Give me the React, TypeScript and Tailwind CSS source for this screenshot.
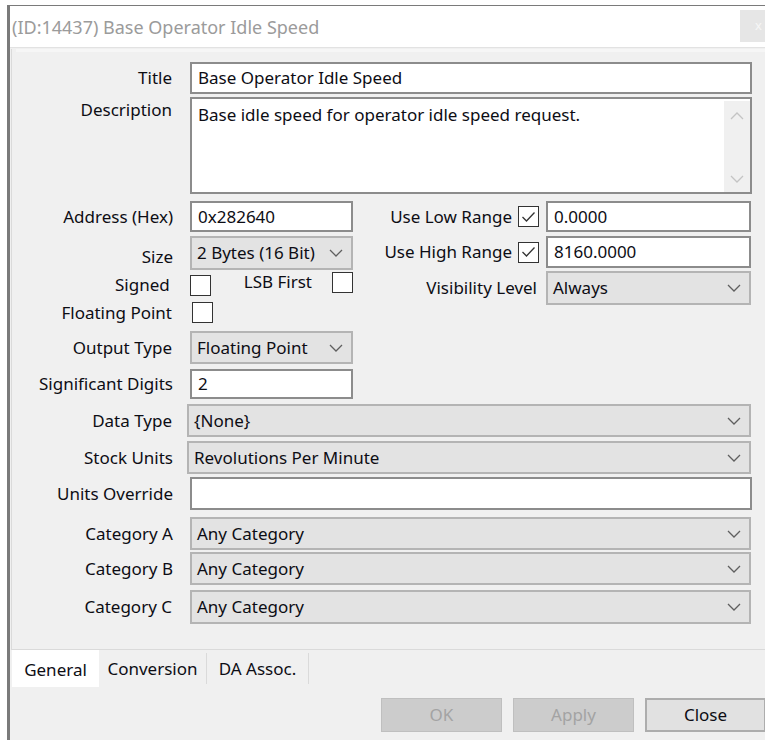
import React from "react";

const FONT = { fontFamily: '"Noto Sans", "Open Sans", sans-serif' };

function Chevron({ color = "#5f5f5f", up = false }: { color?: string; up?: boolean }) {
  return (
    <svg width="14" height="8" viewBox="0 0 14 8" className="shrink-0">
      <polyline
        points={up ? "1,7 7,1 13,7" : "1,1 7,7 13,1"}
        fill="none"
        stroke={color}
        strokeWidth="1.3"
      />
    </svg>
  );
}

function CheckBox({ checked = false }: { checked?: boolean }) {
  return (
    <div className="w-[21px] h-[21px] border-[1.5px] border-[#333333] bg-white flex items-center justify-center shrink-0">
      {checked && (
        <svg width="15" height="12" viewBox="0 0 15 12">
          <polyline points="1.5,6 5.5,10 13.5,1.5" fill="none" stroke="#333333" strokeWidth="1.3" />
        </svg>
      )}
    </div>
  );
}

function TextBox({ value, className = "" }: { value: string; className?: string }) {
  return (
    <div className={`border-2 border-[#8c8c8c] bg-white flex items-center pl-[6px] text-[17px] text-[#0d0d14] whitespace-nowrap ${className}`}>
      {value}
    </div>
  );
}

function Combo({ value, className = "" }: { value: string; className?: string }) {
  return (
    <div className={`border-2 border-[#b4b4b4] bg-[#e3e3e3] flex items-center justify-between pl-[5px] pr-[8px] text-[17px] text-[#0d0d14] whitespace-nowrap ${className}`}>
      <span>{value}</span>
      <Chevron />
    </div>
  );
}

function Label({ text, className = "" }: { text: string; className?: string }) {
  return <div className={`text-right text-[17px] text-[#0d0d14] whitespace-nowrap ${className}`}>{text}</div>;
}

export default function App() {
  return (
    <div className="w-[765px] h-[740px] bg-white overflow-hidden" style={FONT}>
      <div className="ml-[7px] mt-[5px] border-l-[3px] border-t border-[#7a7a7a] h-[735px] flex flex-col">
        {/* caption bar */}
        <div className="h-[42px] bg-white flex justify-between border-b border-[#e2e2e2] shrink-0">
          <div className="pl-[2px] pt-[8px] text-[18px] text-[#9b9b9b] whitespace-nowrap">(ID:14437) Base Operator Idle Speed</div>
          <div className="w-[25px] h-[32px] mt-[4px] bg-[#e6e6e6] flex items-center justify-end pr-[3px] text-[13px] text-[#f6f6f6]">x</div>
        </div>

        {/* dialog body */}
        <div className="flex-1 bg-[#f0f0f0] flex flex-col">
          <div className="ml-[1px] mt-[1px] h-[600px] border-l border-[#dadada] bg-[#f0f0f0] flex flex-col">
            <div className="h-[3px] bg-[#f6f6f6] ml-[4px]" />
            {/* Title */}
            <div className="flex items-center mt-[10px]">
              <Label text="Title" className="w-[160px]" />
              <TextBox value="Base Operator Idle Speed" className="ml-[18px] w-[562px] h-[32px]" />
            </div>
            {/* Description */}
            <div className="flex items-start mt-[3px]">
              <Label text="Description" className="w-[160px]" />
              <div className="ml-[18px] w-[562px] h-[97px] border-2 border-[#8c8c8c] bg-white flex">
                <div className="flex-1 pl-[6px] pt-[3px] text-[17px] text-[#0d0d14]">
                  Base idle speed for operator idle speed request.
                </div>
                <div className="w-[26px] mt-[2px] bg-[#f0f0f0] flex flex-col items-center justify-between pt-[11px] pb-[9px]">
                  <Chevron up color="#c4c4c4" />
                  <Chevron color="#c4c4c4" />
                </div>
              </div>
            </div>

            {/* address / size / flags with ranges on the right */}
            <div className="flex mt-[7px]">
              <div className="flex flex-col w-[341px]">
                <div className="flex items-center h-[31px]">
                  <Label text="Address (Hex)" className="w-[161px]" />
                  <TextBox value="0x282640" className="ml-[17px] w-[163px] h-[31px]" />
                </div>
                <div className="flex items-end h-[34px] mt-[4px]">
                  <Label text="Size" className="w-[161px] pb-[1px]" />
                  <Combo value="2 Bytes (16 Bit)" className="ml-[17px] w-[163px] h-[34px]" />
                </div>
                <div className="flex items-start h-[24px] mt-[2px]">
                  <Label text="Signed" className="w-[160px]" />
                  <div className="ml-[20px] mt-[3px]">
                    <CheckBox />
                  </div>
                  <Label text="LSB First" className="ml-[33px] mt-[-3px]" />
                  <div className="ml-[20px]">
                    <CheckBox />
                  </div>
                </div>
                <div className="flex items-center h-[21px] mt-[6px]">
                  <Label text="Floating Point" className="w-[160px]" />
                  <div className="ml-[20px]">
                    <CheckBox />
                  </div>
                </div>
              </div>
              <div className="flex flex-col items-end w-[398px]">
                <div className="flex items-center h-[31px]">
                  <Label text="Use Low Range" />
                  <div className="ml-[6px]">
                    <CheckBox checked />
                  </div>
                  <TextBox value="0.0000" className="ml-[7px] w-[205px] h-[31px]" />
                </div>
                <div className="flex items-center h-[32px] mt-[4px]">
                  <Label text="Use High Range" />
                  <div className="ml-[6px]">
                    <CheckBox checked />
                  </div>
                  <TextBox value="8160.0000" className="ml-[7px] w-[205px] h-[32px]" />
                </div>
                <div className="flex items-center h-[34px] mt-[3px]">
                  <Label text="Visibility Level" />
                  <Combo value="Always" className="ml-[9px] w-[205px] h-[34px]" />
                </div>
              </div>
            </div>

            {/* Output Type */}
            <div className="flex items-center mt-[8px]">
              <Label text="Output Type" className="w-[160px]" />
              <Combo value="Floating Point" className="ml-[18px] w-[163px] h-[33px]" />
            </div>
            {/* Significant Digits */}
            <div className="flex items-center mt-[5px]">
              <Label text="Significant Digits" className="w-[161px]" />
              <TextBox value="2" className="ml-[17px] w-[163px] h-[30px]" />
            </div>
            {/* Data Type */}
            <div className="flex items-center mt-[5px]">
              <Label text="Data Type" className="w-[160px]" />
              <Combo value="{None}" className="ml-[15px] w-[564px] h-[33px]" />
            </div>
            {/* Stock Units */}
            <div className="flex items-center mt-[4px]">
              <Label text="Stock Units" className="w-[161px]" />
              <Combo value="Revolutions Per Minute" className="ml-[14px] w-[564px] h-[33px]" />
            </div>
            {/* Units Override */}
            <div className="flex items-center mt-[3px]">
              <Label text="Units Override" className="w-[161px]" />
              <TextBox value="" className="ml-[17px] w-[562px] h-[33px]" />
            </div>
            {/* Categories */}
            <div className="flex items-center mt-[7px]">
              <Label text="Category A" className="w-[161px]" />
              <Combo value="Any Category" className="ml-[17px] w-[561px] h-[33px]" />
            </div>
            <div className="flex items-center mt-[2px]">
              <Label text="Category B" className="w-[161px]" />
              <Combo value="Any Category" className="ml-[17px] w-[561px] h-[33px]" />
            </div>
            <div className="flex items-center mt-[5px]">
              <Label text="Category C" className="w-[160px]" />
              <Combo value="Any Category" className="ml-[18px] w-[561px] h-[34px]" />
            </div>
          </div>

          {/* tab strip */}
          <div className="border-t border-[#dadada] flex items-start h-[38px] ml-[1px]">
            <div className="ml-[1px] w-[87px] h-[37px] bg-white flex items-center justify-center pt-[2px] text-[17px] text-[#0d0d14]">
              General
            </div>
            <div className="mt-[3px] w-[108px] h-[31px] border-r border-[#dadada] flex items-center justify-center text-[17px] text-[#0d0d14]">
              Conversion
            </div>
            <div className="mt-[3px] w-[102px] h-[31px] border-r border-[#dadada] flex items-center justify-center text-[17px] text-[#0d0d14]">
              DA Assoc.
            </div>
          </div>

          {/* dialog buttons */}
          <div className="flex justify-end gap-[11px] mt-[11px]">
            <div className="w-[121px] h-[34px] bg-[#cccccc] border border-[#bfbfbf] flex items-center justify-center text-[17px] text-[#a3a3a3]">
              OK
            </div>
            <div className="w-[121px] h-[34px] bg-[#cccccc] border border-[#bfbfbf] flex items-center justify-center text-[17px] text-[#a3a3a3]">
              Apply
            </div>
            <div className="w-[121px] h-[34px] bg-[#e1e1e1] border-2 border-[#adadad] flex items-center justify-center text-[17px] text-[#0d0d14] mr-[-1px]">
              Close
            </div>
          </div>
        </div>
      </div>
    </div>
  );
}
